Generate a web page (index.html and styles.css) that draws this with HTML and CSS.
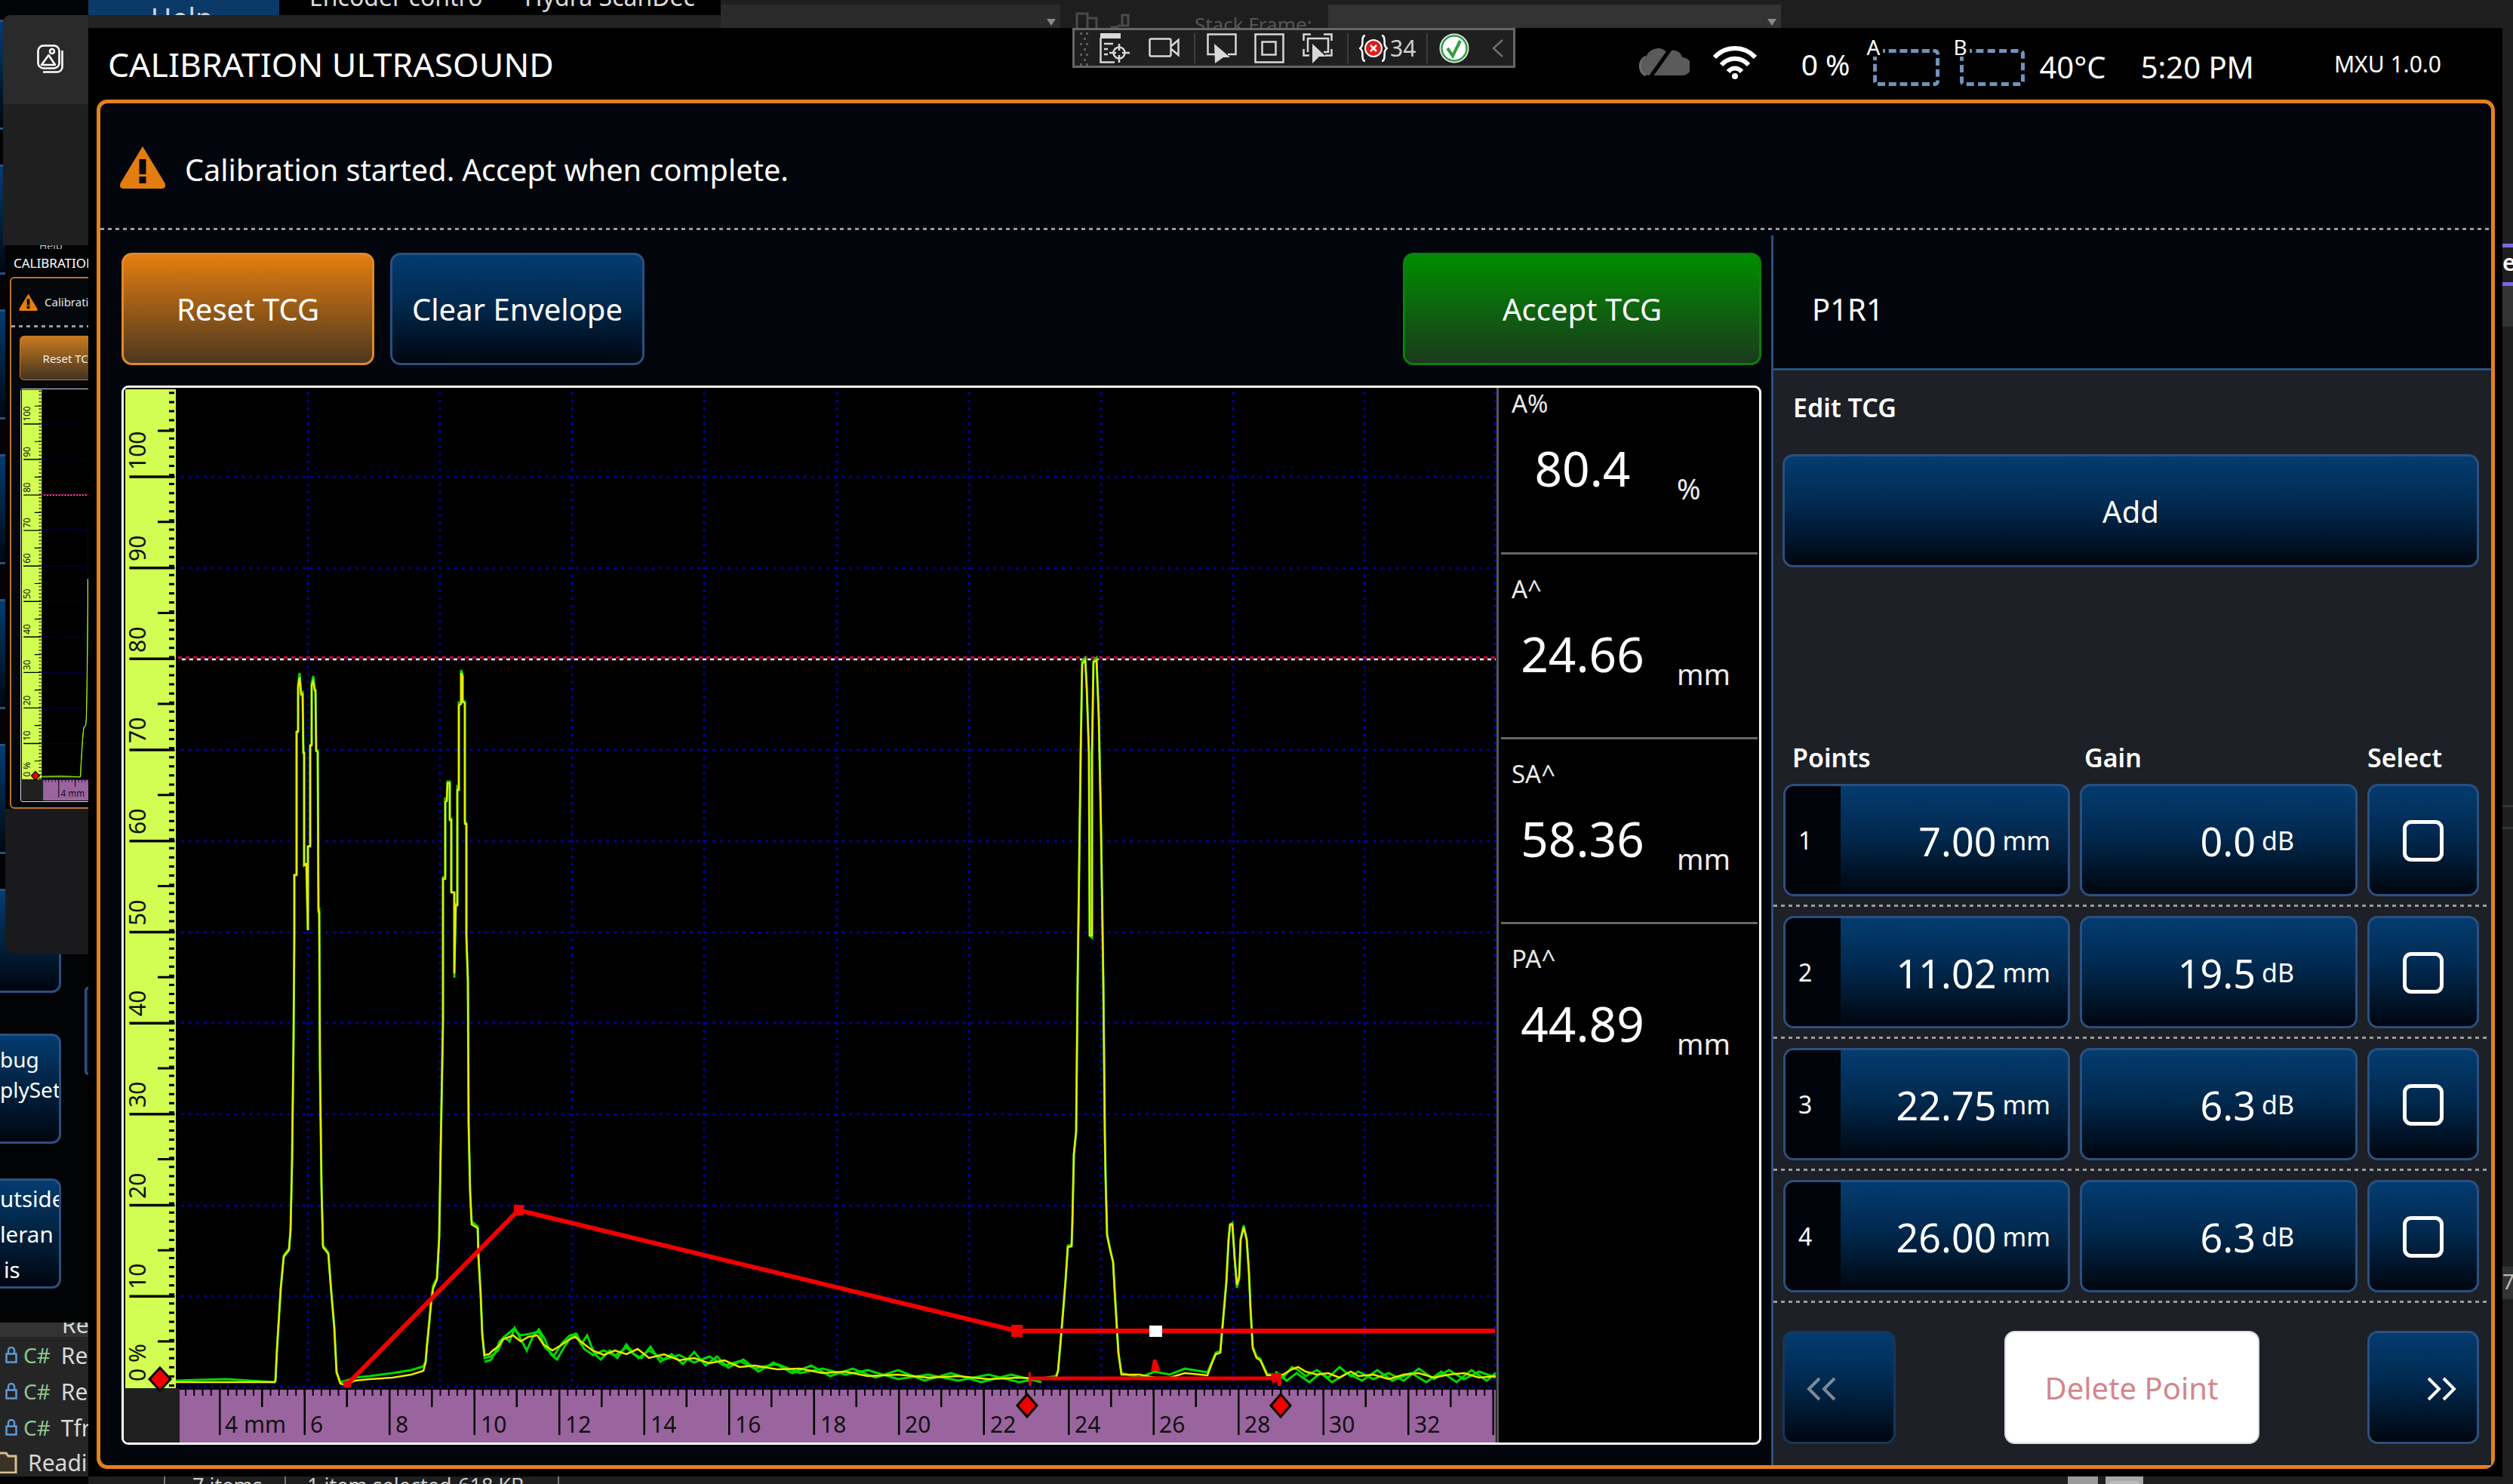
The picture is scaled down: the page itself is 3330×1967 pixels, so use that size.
FILE: index.html
```html
<!DOCTYPE html>
<html lang="en">
<head>
<meta charset="utf-8">
<title>Calibration Ultrasound</title>
<link rel="stylesheet" href="styles.css">
</head>
<body>
<div class="desktop">

  <div class="bg-top">
    <span class="bg-y">Y</span>
    <div class="bg-help">Help</div>
    <div class="bg-tabs"><span class="bg-tab-enc">Encoder contro</span><span class="bg-tab-hyd">Hydra ScanDec</span></div>
    <div class="bg-combo"><span class="bg-arrow"></span></div>
    <svg class="bg-stack-icons" width="72" height="32" viewBox="0 0 72 32"><g fill="none" stroke="#4a4a4a" stroke-width="3"><path d="M2 32V4h14v28M16 10h12v22"/><path d="M48 32V22h8v10M56 20h6V6h8v14h-8"/></g></svg>
    <span class="bg-stack-label">Stack Frame:</span>
    <div class="bg-combo bg-combo-wide"><span class="bg-arrow"></span></div>
    <div class="bg-strip"></div>
  </div>

  <div class="bg-left">
    <div class="bg-buttons">
      <div class="bg-btn"></div><div class="bg-btn"></div><div class="bg-btn"></div>
      <div class="bg-btn"></div><div class="bg-btn"></div><div class="bg-btn"></div>
      <div class="bg-btn bg-btn-short"></div>
      <div class="bg-btn bg-btn-small"><span>bug</span><span>plySet</span></div>
      <div class="bg-btn bg-btn-big"><span>utside</span><span>leran</span><span class="bg-indent">is</span></div>
    </div>
    <div class="bg-sliver"></div>
    <div class="bg-list">
      <div class="bg-list-top">Re</div>
      <div class="bg-row"><svg class="lock" width="16" height="22" viewBox="0 0 16 22"><path d="M4 9V5a4 4 0 0 1 8 0v4M1.500 9.500h13v11h-13z" fill="none" stroke="#5f9bd6" stroke-width="2.500"/></svg><span class="cs">C#</span><span>Re</span></div>
      <div class="bg-row"><svg class="lock" width="16" height="22" viewBox="0 0 16 22"><path d="M4 9V5a4 4 0 0 1 8 0v4M1.500 9.500h13v11h-13z" fill="none" stroke="#5f9bd6" stroke-width="2.500"/></svg><span class="cs">C#</span><span>Re</span></div>
      <div class="bg-row"><svg class="lock" width="16" height="22" viewBox="0 0 16 22"><path d="M4 9V5a4 4 0 0 1 8 0v4M1.500 9.500h13v11h-13z" fill="none" stroke="#5f9bd6" stroke-width="2.500"/></svg><span class="cs">C#</span><span>Tfr</span></div>
      <div class="bg-row bg-row-folder"><svg class="folder" width="24" height="30" viewBox="0 0 24 30"><path d="M-4 3h12l3 4h10v22H-4z" fill="#3b3325" stroke="#d9c08e" stroke-width="3"/></svg><span>Reading</span></div>
    </div>
  </div>

  <div class="bg-right">
    <div class="bg-tabline"></div>
    <div class="bg-tabtext">e</div>
    <div class="bg-tabline"></div>
    <div class="bg-tabfoot"></div>
    <div class="bg-rule bg-rule-a"></div>
    <div class="bg-rule"></div>
    <div class="bg-seven">7</div>
  </div>

  <div class="bg-status">
    <span class="bg-status-sep bg-sep-a"></span>
    <span class="bg-status-a">7 items</span>
    <span class="bg-status-sep bg-sep-b"></span>
    <span class="bg-status-b">1 item selected</span>
    <span class="bg-status-c">618 KB</span>
    <span class="bg-status-sep bg-sep-c"></span>
    <span class="bg-stat-icon"></span>
    <span class="bg-stat-icon bg-stat-icon-b"></span>
  </div>

  <!-- preview thumbnail of the same window -->
  <div class="thumb">
    <div class="thumb-inner">
      <div class="thumb-help">Help</div>
      <div class="thumb-title">CALIBRATION ULTRASOUND</div>
      <div class="thumb-frame">
        <div class="thumb-alert">
          <svg width="25" height="23" viewBox="0 0 62 57"><use href="#warn"/></svg>
          <span>Calibration started. Accept when complete.</span>
        </div>
        <div class="dots thumb-dots"></div>
        <div class="thumb-btn">Reset TCG</div>
        <div class="thumb-chart">
          <svg width="710" height="545" viewBox="164 514 1820 1398"><use href="#scope"/></svg>
        </div>
      </div>
    </div>
  </div>

  <div class="left-tile">
    <div class="left-tile-top">
      <svg width="36" height="38" viewBox="0 0 36 38" fill="none" stroke="#fff" stroke-width="2.600">
        <rect x="1.500" y="1.500" width="28" height="30" rx="7"/>
        <path d="M33.500 8v22a7 7 0 0 1-7 6.500H8"/>
        <circle cx="20" cy="9" r="3"/>
        <path d="M6 27l9.500-13L24 27z" stroke-linejoin="round"/>
      </svg>
    </div>
  </div>

  <main class="window">
    <header class="titlebar">
      <h1 class="title">CALIBRATION ULTRASOUND</h1>
      <div class="status">
        <svg class="st-cloud" width="68" height="42" viewBox="0 0 68 42">
          <path d="M14 40a12 12 0 0 1-4-23 16 16 0 0 1 28-7 12 12 0 0 1 20 6 12 12 0 0 1 0 24z" fill="#5b5b5b"/>
          <path d="M10 40a14 14 0 0 1 0-25" fill="none" stroke="#6d6d6d" stroke-width="3"/>
          <path d="M16 42L46 0" stroke="#000" stroke-width="5"/>
        </svg>
        <svg class="st-wifi" width="58" height="44" viewBox="0 0 58 44" fill="none" stroke="#fff" stroke-width="6" stroke-linecap="butt">
          <path d="M2 15C17 -1 41 -1 56 15"/>
          <path d="M11 25C21 14 37 14 47 25"/>
          <path d="M20 34C25 28 33 28 38 34"/>
          <circle cx="29" cy="40" r="4" fill="#fff" stroke="none"/>
        </svg>
        <span class="st-pct">0 %</span>
        <div class="st-slot"><span class="st-box"></span><span class="st-letter">A</span></div>
        <div class="st-slot st-slot-b"><span class="st-box"></span><span class="st-letter">B</span></div>
        <span class="st-temp">40°C</span>
        <span class="st-time">5:20 PM</span>
        <span class="st-ver">MXU 1.0.0</span>
      </div>
    </header>

    <div class="frame">
      <div class="alert">
        <svg class="alert-icon" width="62" height="57" viewBox="0 0 62 57">
          <g id="warn">
            <path d="M31 1L60 49c2 4 1 8-3 8H5c-4 0-5-4-3-8z" fill="#e47d10"/>
            <rect x="26.500" y="18" width="9" height="20" fill="#050505"/>
            <rect x="26.500" y="41" width="9" height="9" fill="#050505"/>
          </g>
        </svg>
        <span class="alert-text">Calibration started. Accept when complete.</span>
      </div>
      <div class="dots"></div>

      <div class="body">
        <section class="left">
          <div class="actions">
            <button class="btn btn-orange">Reset TCG</button>
            <button class="btn btn-blue">Clear Envelope</button>
            <button class="btn btn-green">Accept TCG</button>
          </div>

          <div class="chart">
            <svg class="scope" width="1819" height="1398" viewBox="164 514 1819 1398">
              <g id="scope">
                <rect x="164" y="514" width="1820" height="1398" fill="#000"/>
                <rect x="166" y="516" width="67" height="1324" fill="#d2fd52"/>
                <rect x="164" y="1840" width="74" height="72" fill="#202020"/>
                <rect x="238" y="1842" width="1744" height="70" fill="#9a649e"/>

                <!-- grid -->
                <g class="grid">
                  <line x1="240" y1="632" x2="1982" y2="632"/>
                  <line x1="240" y1="753" x2="1982" y2="753"/>
                  <line x1="240" y1="873" x2="1982" y2="873"/>
                  <line x1="240" y1="994" x2="1982" y2="994"/>
                  <line x1="240" y1="1115" x2="1982" y2="1115"/>
                  <line x1="240" y1="1236" x2="1982" y2="1236"/>
                  <line x1="240" y1="1356" x2="1982" y2="1356"/>
                  <line x1="240" y1="1477" x2="1982" y2="1477"/>
                  <line x1="240" y1="1598" x2="1982" y2="1598"/>
                  <line x1="240" y1="1718" x2="1982" y2="1718"/>
                  <line x1="240" y1="1838" x2="1982" y2="1838"/>
                  <line x1="408" y1="520" x2="408" y2="1838"/>
                  <line x1="583" y1="520" x2="583" y2="1838"/>
                  <line x1="758" y1="520" x2="758" y2="1838"/>
                  <line x1="933" y1="520" x2="933" y2="1838"/>
                  <line x1="1109" y1="520" x2="1109" y2="1838"/>
                  <line x1="1284" y1="520" x2="1284" y2="1838"/>
                  <line x1="1459" y1="520" x2="1459" y2="1838"/>
                  <line x1="1634" y1="520" x2="1634" y2="1838"/>
                  <line x1="1808" y1="520" x2="1808" y2="1838"/>
                  <line x1="1981" y1="520" x2="1981" y2="1838"/>
                </g>

                <!-- amplitude ruler -->
                <g class="ticks">
                  <line class="t-s" x1="227.500" y1="1838" x2="227.500" y2="516"/>
                  <line class="t-m" x1="220" y1="1779.500" x2="220" y2="516"/>
                  <line class="t-l" x1="201.500" y1="1720" x2="201.500" y2="516"/>
                </g>
                <g class="ylabels">
                  <text x="193" y="623" transform="rotate(-90 193 623)">100</text>
                  <text x="193" y="744" transform="rotate(-90 193 744)">90</text>
                  <text x="193" y="865" transform="rotate(-90 193 865)">80</text>
                  <text x="193" y="985" transform="rotate(-90 193 985)">70</text>
                  <text x="193" y="1106" transform="rotate(-90 193 1106)">60</text>
                  <text x="193" y="1227" transform="rotate(-90 193 1227)">50</text>
                  <text x="193" y="1347" transform="rotate(-90 193 1347)">40</text>
                  <text x="193" y="1468" transform="rotate(-90 193 1468)">30</text>
                  <text x="193" y="1589" transform="rotate(-90 193 1589)">20</text>
                  <text x="193" y="1709" transform="rotate(-90 193 1709)">10</text>
                  <text x="193" y="1831" transform="rotate(-90 193 1831)">0 %</text>
                </g>

                <!-- distance ruler -->
                <g class="ticks">
                  <line class="t-xs" x1="245" y1="1846" x2="1982" y2="1846"/>
                  <line class="t-xm" x1="346" y1="1853.500" x2="1982" y2="1853.500"/>
                  <line class="t-xl" x1="290" y1="1872" x2="1982" y2="1872"/>
                </g>
                <g class="xlabels">
                  <text x="298" y="1899">4 mm</text>
                  <text x="411" y="1899">6</text>
                  <text x="524" y="1899">8</text>
                  <text x="637" y="1899">10</text>
                  <text x="749" y="1899">12</text>
                  <text x="862" y="1899">14</text>
                  <text x="974" y="1899">16</text>
                  <text x="1087" y="1899">18</text>
                  <text x="1199" y="1899">20</text>
                  <text x="1312" y="1899">22</text>
                  <text x="1424" y="1899">24</text>
                  <text x="1536" y="1899">26</text>
                  <text x="1649" y="1899">28</text>
                  <text x="1761" y="1899">30</text>
                  <text x="1874" y="1899">32</text>
                </g>

                <!-- threshold -->
                <line class="th-red" x1="236" y1="871.500" x2="1982" y2="871.500"/>
                <line class="th-white" x1="236" y1="874" x2="1982" y2="874"/>

                <!-- A-scan traces -->
                <polyline class="trace trace-green" points="233,1830 300,1828 364,1832 365,1830 367,1789 372,1708 376,1664 383,1655 385,1630 387,1540 389,1377 390,1240 390,1160 393,1158 393,970 395,968 395,908 397,892 399,920 401,918 402,998 403,996 403,1147 406,1145 408,1233 408,1122 411,1120 411,988 413,986 413,906 415,896 417,913 418,915 419,995 421,995 422,1207 423,1206 424,1415 426,1572 428,1651 435,1660 439,1713 443,1760 446,1819 451,1832 459,1830 470,1826 490,1824 520,1820 545,1816 561,1811 564,1804 566,1781 569,1751 571,1726 574,1704 579,1694 582,1640 584,1521 587,1355 587,1163 590,1161 590,1059 592,1060 593,1036 596,1036 596,1085 598,1085 598,1181 602,1183 602,1296 604,1198 606,1198 606,1043 608,1045 608,931 611,931 611,888 613,895 613,928 616,930 616,1088 618,1092 618,1240 620,1300 621,1491 623,1581 625,1619 633,1626 634,1664 637,1717 639,1768 642,1800 650,1798 660,1790 668,1772 680,1762 690,1770 702,1768 714,1765 722,1786 734,1797 745,1780 755,1770 764,1768 774,1788 786,1796 800,1790 815,1797 830,1786 846,1800 860,1790 880,1802 900,1796 920,1806 940,1798 960,1810 980,1804 1000,1814 1030,1808 1060,1820 1090,1814 1120,1822 1150,1816 1190,1828 1230,1822 1270,1830 1310,1822 1350,1832 1399,1824 1402,1817 1405,1783 1408,1747 1412,1697 1415,1651 1420,1650 1421,1620 1423,1530 1426,1500 1428,1300 1430,1150 1432,1000 1434,876 1438,872 1440,910 1443,1000 1444,1240 1447,1243 1447,1000 1449,876 1453,872 1456,950 1459,1100 1462,1300 1464,1500 1465,1560 1467,1637 1471,1655 1475,1673 1477,1710 1480,1760 1482,1793 1486,1820 1510,1826 1530,1818 1550,1822 1570,1814 1600,1819 1606,1805 1611,1793 1617,1791 1621,1745 1625,1700 1628,1643 1630,1623 1633,1621 1636,1667 1639,1707 1642,1695 1644,1643 1648,1624 1652,1643 1655,1687 1657,1733 1660,1785 1665,1798 1670,1801 1679,1821 1700,1826 1712,1812 1720,1816 1730,1824 1745,1816 1760,1826 1775,1812 1790,1824 1800,1818 1820,1828 1840,1820 1860,1830 1880,1814 1900,1828 1920,1816 1940,1828 1960,1818 1982,1826"/>
                <polyline class="trace trace-green" points="642,1805 650,1803 655,1795 662,1778 668,1772 675,1778 682,1760 690,1775 698,1790 706,1772 714,1762 722,1775 730,1795 738,1802 748,1785 755,1775 762,1768 770,1782 778,1770 788,1795 796,1802 808,1790 818,1800 830,1782 840,1795 850,1800 862,1785 875,1805 890,1795 905,1808 920,1792 935,1810 950,1798 965,1813 985,1802 1005,1818 1025,1806 1050,1820 1075,1810 1100,1824 1130,1814 1160,1826 1190,1816 1225,1830 1260,1820 1300,1832 1340,1822 1380,1832"/>
                <polyline class="trace trace-green" points="1690,1818 1705,1830 1718,1820 1735,1832 1750,1820 1765,1832 1785,1820 1805,1830 1825,1816 1845,1830 1870,1820 1890,1832 1910,1818 1930,1832 1950,1816 1970,1830 1982,1820"/>
                <polyline class="trace trace-yellow" points="233,1832 300,1832 364,1832 365,1830 367,1789 372,1708 376,1666 383,1657 385,1630 387,1540 389,1377 390,1240 390,1160 393,1160 393,970 395,970 395,910 397,898 399,920 401,920 402,998 403,998 403,1147 406,1145 408,1233 408,1122 411,1122 411,988 413,988 413,908 415,903 417,915 418,915 419,995 421,997 422,1207 423,1208 424,1415 426,1572 428,1653 435,1662 439,1713 443,1760 446,1819 451,1834 459,1836 470,1830 490,1828 520,1826 545,1822 561,1817 564,1806 566,1781 569,1751 571,1730 574,1708 579,1696 582,1640 584,1521 587,1355 587,1165 590,1165 590,1063 592,1062 593,1038 596,1038 596,1087 598,1087 598,1183 602,1183 602,1290 604,1200 606,1200 606,1047 608,1047 608,935 611,933 611,892 613,897 613,930 616,932 616,1092 618,1092 618,1240 620,1300 621,1491 623,1581 625,1623 633,1628 634,1666 637,1717 639,1768 642,1796 648,1795 653,1790 660,1785 667,1775 680,1770 690,1778 700,1772 712,1770 720,1782 732,1790 745,1782 755,1775 762,1772 772,1780 785,1790 800,1796 815,1790 830,1795 845,1788 860,1800 880,1795 900,1803 920,1800 940,1807 960,1803 980,1812 1000,1810 1030,1815 1060,1814 1090,1820 1120,1818 1150,1824 1190,1822 1230,1826 1270,1824 1310,1828 1350,1826 1399,1828 1402,1817 1405,1783 1408,1747 1412,1697 1415,1653 1420,1652 1421,1620 1423,1530 1426,1500 1428,1300 1430,1150 1432,1000 1434,880 1438,875 1440,910 1443,1000 1444,1240 1447,1240 1447,1000 1449,878 1453,875 1456,950 1459,1100 1462,1300 1464,1500 1465,1560 1467,1637 1471,1657 1475,1673 1477,1710 1480,1760 1482,1793 1486,1822 1510,1822 1530,1826 1550,1826 1570,1820 1600,1823 1606,1807 1611,1795 1617,1793 1621,1747 1625,1700 1628,1643 1630,1623 1633,1623 1636,1667 1639,1703 1642,1693 1644,1643 1648,1627 1652,1643 1655,1687 1657,1733 1660,1787 1665,1800 1670,1803 1679,1823 1700,1822 1712,1815 1720,1812 1730,1818 1745,1822 1760,1820 1775,1826 1790,1818 1800,1824 1820,1822 1840,1828 1860,1822 1880,1820 1900,1826 1920,1822 1940,1820 1960,1826 1982,1824"/>

                <!-- TCG curve and gate -->
                <polyline class="tcg" points="459,1836 687,1604 1347,1764 1981,1764"/>
                <rect class="red" x="681" y="1597" width="13" height="14"/>
                <rect class="red" x="1340" y="1756" width="15" height="16"/>
                <rect x="1523" y="1757" width="17" height="15" fill="#fff"/>
                <line class="gate" x1="1364" y1="1827" x2="1690" y2="1827"/>
                <rect class="red" x="1363" y="1819" width="3" height="18"/>
                <path class="red" d="M1684 1820h14v17h-5l-1-6-6 3z"/>
                <path class="red" d="M1525 1817l3-15h4l6 15z"/>
                <rect class="red" x="455" y="1830" width="10" height="9"/>
                <path class="marker" d="M212 1813l14 15-14 15-14-15z"/>
                <path class="marker" d="M1361 1848l13 15-13 15-13-15z"/>
                <path class="marker" d="M1697 1848l13 15-13 15-13-15z"/>
              </g>
            </svg>
            <div class="readouts">
              <div class="readout readout-first">
                <div class="ro-label">A%</div>
                <div class="ro-line"><span class="ro-val">80.4</span><span class="ro-unit">%</span></div>
              </div>
              <div class="readout">
                <div class="ro-label">A^</div>
                <div class="ro-line"><span class="ro-val">24.66</span><span class="ro-unit">mm</span></div>
              </div>
              <div class="readout">
                <div class="ro-label">SA^</div>
                <div class="ro-line"><span class="ro-val">58.36</span><span class="ro-unit">mm</span></div>
              </div>
              <div class="readout readout-last">
                <div class="ro-label">PA^</div>
                <div class="ro-line"><span class="ro-val">44.89</span><span class="ro-unit">mm</span></div>
              </div>
            </div>
          </div>
        </section>

        <aside class="panel">
          <div class="panel-head">P1R1</div>
          <div class="panel-body">
            <div class="panel-title">Edit TCG</div>
            <button class="btn btn-blue btn-add">Add</button>

            <div class="grid-row grid-head">
              <span>Points</span><span>Gain</span><span>Select</span>
            </div>

            <div class="grid-row point">
              <div class="cell cell-pos"><span class="idx">1</span><span class="num">7.00</span><span class="unit">mm</span></div>
              <div class="cell cell-gain"><span class="num">0.0</span><span class="unit">dB</span></div>
              <div class="cell cell-check"><span class="checkbox"></span></div>
            </div>
            <div class="dots dots-row"></div>
            <div class="grid-row point">
              <div class="cell cell-pos"><span class="idx">2</span><span class="num">11.02</span><span class="unit">mm</span></div>
              <div class="cell cell-gain"><span class="num">19.5</span><span class="unit">dB</span></div>
              <div class="cell cell-check"><span class="checkbox"></span></div>
            </div>
            <div class="dots dots-row"></div>
            <div class="grid-row point">
              <div class="cell cell-pos"><span class="idx">3</span><span class="num">22.75</span><span class="unit">mm</span></div>
              <div class="cell cell-gain"><span class="num">6.3</span><span class="unit">dB</span></div>
              <div class="cell cell-check"><span class="checkbox"></span></div>
            </div>
            <div class="dots dots-row"></div>
            <div class="grid-row point">
              <div class="cell cell-pos"><span class="idx">4</span><span class="num">26.00</span><span class="unit">mm</span></div>
              <div class="cell cell-gain"><span class="num">6.3</span><span class="unit">dB</span></div>
              <div class="cell cell-check"><span class="checkbox"></span></div>
            </div>
            <div class="dots dots-row dots-last"></div>

            <div class="nav">
              <button class="btn btn-blue btn-nav">
                <svg width="40" height="32" viewBox="0 0 40 32" fill="none" stroke="#7e8a96" stroke-width="4"><path d="M18 2L4 16l14 14"/><path d="M38 2L24 16l14 14"/></svg>
              </button>
              <button class="btn btn-delete">Delete Point</button>
              <button class="btn btn-blue btn-nav btn-nav-next">
                <svg width="40" height="32" viewBox="0 0 40 32" fill="none" stroke="#fff" stroke-width="4"><path d="M2 2l14 14L2 30"/><path d="M22 2l14 14-14 14"/></svg>
              </button>
            </div>
          </div>
        </aside>
      </div>
    </div>
  </main>

  <!-- floating toolbar -->
  <div class="toolbar">
    <svg class="tb-grip" width="12" height="46" viewBox="0 0 12 46" fill="#5a5a5a">
      <rect x="0" y="2" width="3" height="3"/><rect x="8" y="2" width="3" height="3"/>
      <rect x="5" y="9" width="3" height="3"/><rect x="0" y="16" width="3" height="3"/><rect x="8" y="16" width="3" height="3"/>
      <rect x="5" y="23" width="3" height="3"/><rect x="0" y="30" width="3" height="3"/><rect x="8" y="30" width="3" height="3"/>
      <rect x="5" y="37" width="3" height="3"/><rect x="0" y="43" width="3" height="3"/><rect x="8" y="43" width="3" height="3"/>
    </svg>
    <svg class="tb-i1" width="40" height="40" viewBox="0 0 40 40" fill="none" stroke="#d8d8d8" stroke-width="2.500">
      <path d="M1.500 6V38.500H20"/>
      <rect x="1" y="0" width="27" height="7" fill="#d8d8d8" stroke="none"/>
      <path d="M6 14h12M6 21h5M6 28h5"/>
      <circle cx="26" cy="26" r="7.500"/>
      <path d="M26 14v9M26 29v10M13 26h9M30 26h10"/>
    </svg>
    <svg class="tb-i2" width="41" height="26" viewBox="0 0 41 26" fill="none" stroke="#d8d8d8" stroke-width="2.500">
      <rect x="1.500" y="1.500" width="28" height="23" rx="2"/>
      <path d="M30 11L39.500 3v20L30 15"/>
    </svg>
    <span class="tb-sep"></span>
    <svg class="tb-i3" width="40" height="40" viewBox="0 0 40 40" fill="none" stroke="#d8d8d8" stroke-width="2.500">
      <path d="M12 28H1.500V1.500h37V28H28"/>
      <path d="M10 14l21 18-9 0-11 8z" fill="#d8d8d8" stroke="none"/>
    </svg>
    <svg class="tb-i4" width="40" height="40" viewBox="0 0 40 40" fill="none" stroke="#d8d8d8" stroke-width="2.500">
      <rect x="1.500" y="1.500" width="37" height="37"/>
      <rect x="10.500" y="11.500" width="18" height="17"/>
    </svg>
    <svg class="tb-i5" width="40" height="40" viewBox="0 0 40 40" fill="none" stroke="#d8d8d8" stroke-width="2.500">
      <path d="M1.500 10V1.500H11M28 1.500h10.500V10M38.500 21v8.500H30M1.500 21v8.500H9"/>
      <path d="M7 25V7h27v18H28"/>
      <path d="M13 14l18 17-9 0-9 9z" fill="#d8d8d8" stroke="none"/>
    </svg>
    <span class="tb-sep"></span>
    <svg class="tb-i6" width="38" height="36" viewBox="0 0 38 36">
      <path d="M8 1C3 1 5 11 4 14c-1 3-3 4-3 4s2 1 3 4c1 3-1 13 4 13M30 1c5 0 3 10 4 13 1 3 3 4 3 4s-2 1-3 4c-1 3 1 13-4 13" fill="none" stroke="#fff" stroke-width="2.500"/>
      <circle cx="19" cy="18" r="11" fill="#e01b1b" stroke="#fff" stroke-width="2"/>
      <path d="M15 14l8 8M23 14l-8 8" stroke="#fff" stroke-width="2.500"/>
    </svg>
    <span class="tb-count">34</span>
    <span class="tb-sep"></span>
    <svg class="tb-i7" width="40" height="40" viewBox="0 0 40 40">
      <circle cx="20" cy="20" r="18.500" fill="#fff" stroke="#e8e8e8" stroke-width="2"/>
      <circle cx="20" cy="20" r="16.500" fill="#fff" stroke="#2f9e44" stroke-width="2.500"/>
      <path d="M11 20l7 10 10-20" fill="none" stroke="#2f9e44" stroke-width="4"/>
    </svg>
    <svg class="tb-i8" width="16" height="24" viewBox="0 0 16 24" fill="none" stroke="#6e6e6e" stroke-width="2.500"><path d="M14 1L2 12l12 11"/></svg>
  </div>
</div>
</body>
</html>
```

FILE: styles.css
```css
* { box-sizing: border-box; }
html, body { margin: 0; padding: 0; background: #1e1e1e; }
body { font-family: "Noto Sans", "Open Sans", sans-serif; color: #fff; overflow: hidden; }
button { font-family: inherit; color: #fff; padding: 0; margin: 0; }
h1 { margin: 0; font-weight: 400; }

.desktop { position: relative; width: 3330px; height: 1967px; overflow: hidden; background: #1e1e1e; }

/* ---------- windows behind the dialog ---------- */
.bg-top { position: absolute; left: 0; top: 0; width: 3330px; height: 37px; overflow: hidden; }
.bg-y { position: absolute; left: 0; top: -24px; font-size: 38px; color: #ddd; }
.bg-help { position: absolute; left: 112px; top: 0; width: 258px; height: 20px; background: #0b3a68; color: #cfd6dd; font-size: 38px; line-height: 46px; text-align: center; overflow: hidden; }
.bg-tabs { position: absolute; left: 370px; top: 0; width: 585px; height: 20px; background: #000; overflow: hidden; }
.bg-tab-enc, .bg-tab-hyd { position: absolute; top: -26px; font-size: 32px; color: #ddd; white-space: nowrap; }
.bg-tab-enc { left: 40px; }
.bg-tab-hyd { left: 325px; }
.bg-combo { position: absolute; left: 955px; top: 6px; width: 450px; height: 31px; background: #2b2b2b; }
.bg-combo-wide { left: 1760px; width: 600px; background: #333; }
.bg-arrow { position: absolute; right: 6px; bottom: 3px; border: 6px solid transparent; border-top: 9px solid #8a8a8a; border-bottom: 0; }
.bg-stack-icons { position: absolute; left: 1425px; top: 14px; }
.bg-stack-label { position: absolute; left: 1583px; top: 14px; font-size: 26px; color: #555; white-space: nowrap; }
.bg-strip { position: absolute; left: 4px; top: 20px; width: 951px; height: 17px; background: #232323; }

.bg-left { position: absolute; left: 0; top: 0; width: 117px; height: 1967px; background: #020305; overflow: hidden; }
.bg-buttons { display: flex; flex-direction: column; gap: 46px; padding-top: 26px; width: 81px; }
.bg-btn { flex: none; height: 146px; background: linear-gradient(#043c70, #00060f); border: 3px solid #2a5080; border-left: 0; border-radius: 0 12px 12px 0; display: flex; flex-direction: column; overflow: hidden; white-space: nowrap; }
.bg-btn-short { height: 138px; margin-bottom: 8px; }
.bg-btn-small { padding-top: 11px; font-size: 28px; line-height: 40px; }
.bg-btn-big { font-size: 29.500px; line-height: 47px; }
.bg-indent { padding-left: 5px; }
.bg-sliver { position: absolute; left: 112px; top: 1308px; width: 5px; height: 117px; border: 3px solid #2a5080; border-right: 0; border-radius: 10px 0 0 10px; background: #04233f; }
.bg-list { position: absolute; left: 0; top: 1753px; width: 117px; height: 204px; background: #252526; font-size: 30px; color: #d8d8d8; overflow: hidden; white-space: nowrap; }
.bg-list-top { height: 19px; background: #333; padding-left: 82px; line-height: 6px; overflow: hidden; }
.bg-row { height: 48px; display: flex; align-items: center; padding-left: 7px; }
.bg-row .lock { flex: none; margin-right: 8px; }
.bg-row .cs { color: #8fc58f; margin-right: 14px; font-size: 28px; }
.bg-row-folder { padding-left: 0; gap: 13px; height: 44px; }
.folder { flex: none; }
.bg-right { position: absolute; left: 3316px; top: 323px; width: 14px; height: 1400px; display: flex; flex-direction: column; overflow: hidden; }
.bg-tabline { height: 5px; background: #7a6ae0; flex: none; }
.bg-tabtext { height: 46px; flex: none; font-size: 30px; font-weight: 600; line-height: 40px; background: #1e1e1e; }
.bg-tabfoot { height: 54px; flex: none; background: #333; }
.bg-rule { height: 3px; background: #333; flex: none; margin-top: 26px; }
.bg-rule-a { margin-top: 634px; }
.bg-seven { margin-top: 580px; height: 43px; flex: none; background: #333; font-size: 28px; color: #bbb; }
.bg-status { position: absolute; left: 117px; top: 1957px; width: 3199px; height: 10px; overflow: hidden; font-size: 27px; color: #ccc; }
.bg-status-a { position: absolute; left: 138px; top: -7px; white-space: nowrap; }
.bg-status-b { position: absolute; left: 290px; top: -7px; white-space: nowrap; }
.bg-status-c { position: absolute; left: 490px; top: -7px; white-space: nowrap; }
.bg-status-sep { position: absolute; top: 0; width: 2px; height: 10px; background: #777; }
.bg-sep-a { left: 100px; }
.bg-sep-b { left: 260px; }
.bg-sep-c { left: 622px; }
.bg-stat-icon { position: absolute; left: 2623px; top: 0; width: 40px; height: 10px; background: #9a9a9a; }
.bg-stat-icon-b { left: 2673px; width: 50px; background: #bcbcbc; border: 6px solid #a8a8a8; border-bottom: 0; }

/* ---------- preview thumbnail ---------- */
.thumb { position: absolute; left: 7px; top: 325px; width: 110px; height: 940px; background: #1a1a1c; border-radius: 0 0 0 16px; overflow: hidden; }
.thumb-inner { width: 1240px; height: 747px; background: #020305; display: flex; flex-direction: column; }
.thumb-help { height: 5px; font-size: 14px; line-height: 2px; color: #bbb; padding-left: 45px; overflow: hidden; flex: none; }
.thumb-title { height: 37px; font-size: 17px; line-height: 37px; padding-left: 11px; white-space: nowrap; flex: none; }
.thumb-frame { margin-left: 6px; height: 705px; border: 2px solid #b87428; border-radius: 6px; flex: none; background: #04070c; }
.thumb-alert { height: 62px; display: flex; align-items: center; gap: 9px; padding-left: 10px; font-size: 15px; white-space: nowrap; color: #e8e8e8; }
.thumb-dots { height: 1px; background: repeating-linear-gradient(90deg, #8a8a8a 0 2px, transparent 2px 4px); }
.thumb-btn { margin: 11px 0 0 11px; width: 132px; height: 59px; border-radius: 6px; background: linear-gradient(#c77a22, #43331e); border: 1px solid #c77a22; display: flex; align-items: center; justify-content: center; font-size: 15px; color: #eee; }
.thumb-chart { margin: 11px 0 0 12px; width: 850px; height: 548px; border: 1px solid #ddd; border-radius: 3px; overflow: hidden; background: #000; }
.thumb-chart svg { display: block; }

.left-tile { position: absolute; left: 4px; top: 20px; width: 113px; height: 305px; background: #1f1f1f; border-radius: 10px 0 0 0; overflow: hidden; }
.left-tile-top { height: 118px; background: #2a2a2a; padding: 39px 0 0 45px; }
.left-tile-top svg { display: block; }

/* ---------- dialog ---------- */
.window { position: absolute; left: 117px; top: 37px; width: 3199px; height: 1920px; background: #000; display: flex; flex-direction: column; }
.titlebar { height: 95px; flex: none; display: flex; align-items: center; padding-left: 26px; }
.title { font-size: 44.500px; line-height: 60px; margin-top: 1px; white-space: nowrap; }
.status { margin-left: auto; padding-right: 81px; display: flex; align-items: center; }
.st-cloud { margin-top: -8px; }
.st-wifi { margin-left: 31px; margin-top: -4px; }
.st-pct { margin-left: 59px; font-size: 39px; }
.st-slot { margin-left: 22px; width: 95px; height: 62px; position: relative; }
.st-slot-b { margin-left: 20px; width: 94px; }
.st-letter { position: absolute; left: -2px; top: -5px; width: 24px; height: 26px; padding-left: 2px; background: #000; font-size: 28px; line-height: 26px; }
.st-box { position: absolute; left: 9px; top: 11px; width: 88px; height: 49px; border: 5px dashed #6f93bb; border-radius: 6px; }
.st-slot-b .st-box { width: 86px; }
.st-temp { margin-left: 20px; font-size: 40px; margin-top: 8px; }
.st-time { margin-left: 46px; font-size: 40px; margin-top: 8px; }
.st-ver { margin-left: 106px; font-size: 30px; }

.frame { flex: 1; margin: 0 10px 10px 11px; border: 5px solid #e3811f; border-radius: 14px; background: #02060c; display: flex; flex-direction: column; min-height: 0; }
.alert { height: 165px; flex: none; display: flex; align-items: center; padding-left: 25px; }
.alert-icon { flex: none; display: block; margin-top: 4px; }
.alert-text { margin: 11px 0 0 25px; font-size: 39.700px; }
.dots { height: 3px; flex: none; background: repeating-linear-gradient(90deg, #9b9b9b 0 5px, transparent 5px 10px); }

.body { flex: 1; display: flex; min-height: 0; }
.left { flex: none; width: 2214px; padding: 30px 13px 27px 28px; display: flex; flex-direction: column; }
.actions { display: flex; gap: 21px; flex: none; }
.btn { border-radius: 14px; font-size: 40px; display: flex; align-items: center; justify-content: center; border: 3px solid #2a5080; background: linear-gradient(#043c70 0%, #01294f 45%, #00060f 100%); }
.actions .btn { height: 149px; }
.btn-orange { width: 335px; border-color: #e08a2c; background: linear-gradient(#e47d10, #4c3820); }
.btn-blue { width: 337px; }
.actions .btn-green { width: 475px; margin-left: auto; border-color: #0c800c; background: linear-gradient(#008e00, #1b3a1e); }

.chart { flex: 1; margin-top: 27px; border: 3px solid #fff; border-radius: 9px; background: #000; display: flex; overflow: hidden; min-height: 0; }
.scope { display: block; flex: none; }
.grid line { stroke: #0000a8; stroke-width: 3; stroke-dasharray: 3.500 6.560; }
.ticks line { stroke: #000; fill: none; }
.t-s { stroke-width: 7; stroke-dasharray: 3 9.070; }
.t-m { stroke-width: 22; stroke-dasharray: 3 117.700; }
.t-l { stroke-width: 60; stroke-dasharray: 3.500 117.200; }
.t-xs { stroke-width: 8; stroke-dasharray: 2 9.250; }
.t-xm { stroke-width: 23; stroke-dasharray: 2.500 110; }
.t-xl { stroke-width: 60; stroke-dasharray: 2.500 110; }
.ylabels text { font-family: "Noto Sans", sans-serif; font-size: 30px; fill: #111; }
.xlabels text { font-family: "Noto Sans", sans-serif; font-size: 30px; fill: #111; }
.th-red { stroke: #d8002b; stroke-width: 3; stroke-dasharray: 5 5; }
.th-white { stroke: #f2f2f2; stroke-width: 2.500; stroke-dasharray: 5 5; stroke-dashoffset: 5; }
.trace { fill: none; stroke-linejoin: miter; }
.trace-green { stroke: #00d800; stroke-width: 3; }
.trace-yellow { stroke: #e9e900; stroke-width: 2.500; }
.tcg { fill: none; stroke: #f00000; stroke-width: 6; }
.red { fill: #f00000; }
.gate { stroke: #f00000; stroke-width: 5; }
.marker { fill: #f00000; stroke: #000; stroke-width: 3; }

.readouts { flex: 1; border-left: 3px solid #555; display: flex; flex-direction: column; padding: 0 0 0 3px; }
.readout { height: 245px; flex: none; border-bottom: 3px solid #666; padding: 25px 0 0 14px; margin-right: 2px; }
.readout-first { height: 221px; padding-top: 0; }
.readout-last { border-bottom: 0; }
.ro-label { font-size: 33px; line-height: 42px; color: #eaeaea; }
.ro-line { margin-top: 20px; white-space: nowrap; }
.ro-val { display: inline-block; width: 196px; text-align: center; font-size: 64px; line-height: 90px; margin-left: -4px; }
.ro-unit { font-size: 38px; margin-left: 27px; vertical-align: -17px; color: #eee; }

.panel { flex: 1; margin-top: 7px; border-left: 3px solid #2a5080; display: flex; flex-direction: column; min-width: 0; }
.panel-head { height: 179px; flex: none; display: flex; align-items: center; padding: 18px 0 0 51px; font-size: 40px; border-bottom: 3px solid #2a5080; }
.panel-body { flex: 1; background: #1d2026; padding: 0 16px 0 12px; display: flex; flex-direction: column; }
.panel-title { height: 111px; flex: none; padding: 24px 0 0 14px; font-size: 34px; line-height: 50px; font-weight: 600; }
.btn-add { width: auto; height: 150px; flex: none; }
.grid-row { display: grid; grid-template-columns: 380px 368px 148px; column-gap: 13px; flex: none; margin-left: 1px; }
.grid-head { margin-top: 228px; height: 48px; margin-bottom: 11px; font-size: 34px; line-height: 48px; font-weight: 600; }
.grid-head span:nth-child(1) { padding-left: 12px; }
.grid-head span:nth-child(2) { padding-left: 6px; }
.point { height: 149px; }
.cell { border: 3px solid #2a5080; border-radius: 14px; background: linear-gradient(#043c70 0%, #01294f 45%, #00060f 100%); display: flex; align-items: center; justify-content: flex-end; overflow: hidden; }
.cell-pos { padding-right: 23px; }
.cell-gain { padding-right: 81px; }
.cell-check { justify-content: center; }
.idx { align-self: stretch; width: 73px; margin-right: auto; background: linear-gradient(#000309, #00040a); display: flex; align-items: center; padding-left: 17px; font-size: 32px; flex: none; }
.num { font-size: 52px; line-height: 1; margin-top: 2px; }
.unit { font-size: 34px; margin-left: 8px; }
.checkbox { width: 54px; height: 55px; border: 5px solid #fff; border-radius: 11px; margin-top: 2px; }
.dots-row { margin: 11px -11px 12px -12px; }
.dots-last { margin-bottom: 37px; }
.nav { display: flex; justify-content: space-between; flex: none; }
.btn-nav { width: 150px; height: 150px; padding-top: 4px; }
.btn-nav svg { margin-right: 48px; }
.btn-nav-next { width: 148px; }
.btn-nav-next svg { margin: 0 0 0 50px; }
.btn-nav:first-child { border-color: #15375c; }
.btn-delete { width: 338px; height: 150px; background: #fff; border: 2px solid #dcdcdc; color: #d4868c; }

/* ---------- floating toolbar ---------- */
.toolbar { position: absolute; left: 1421px; top: 37px; width: 587px; height: 53px; background: #1f1f1f; border: 3px solid #666; display: flex; align-items: center; padding-left: 7px; }
.tb-grip { flex: none; }
.tb-i1 { margin-left: 14px; }
.tb-i2 { margin-left: 25px; margin-top: -1px; }
.tb-sep { width: 2px; height: 40px; background: #3d3d3d; margin-left: 19px; flex: none; }
.tb-i3 { margin-left: 15px; }
.tb-i4 { margin-left: 23px; }
.tb-i5 { margin-left: 24px; }
.tb-i6 { margin-left: 14px; }
.tb-count { font-size: 30px; color: #d0d0d0; margin-left: 3px; line-height: 1; }
.tb-count + .tb-sep { margin-left: 14px; }
.tb-i7 { margin-left: 15px; }
.tb-i8 { margin-left: 30px; }
```
